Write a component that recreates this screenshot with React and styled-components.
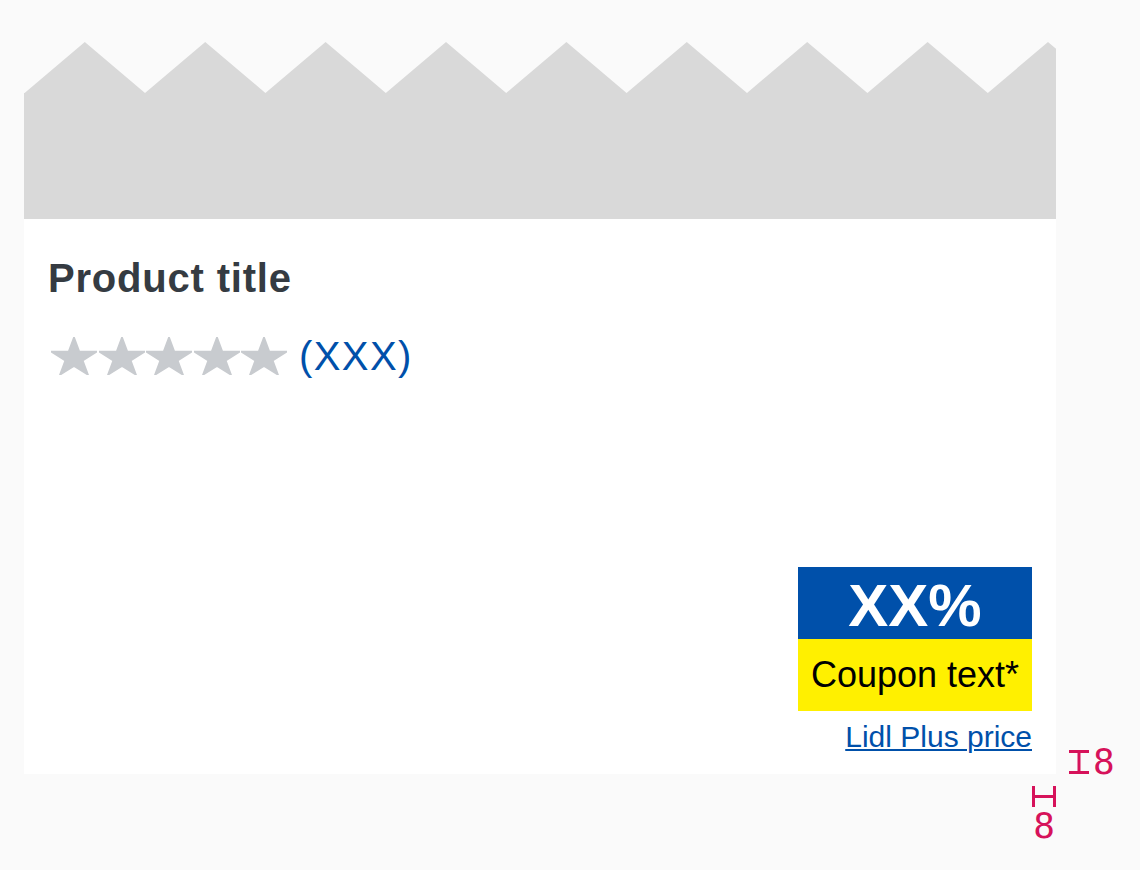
import React from "react";
import styled, { createGlobalStyle } from "styled-components";

const GlobalStyle = createGlobalStyle`
  html, body {
    margin: 0;
    padding: 0;
    background: #fafafa;
    font-family: "Liberation Sans", Arial, sans-serif;
  }
`;

// zigzag top edge of the image placeholder
const ZIG_W = 1032;
const ZIG_H = 177;
const PERIOD = 120.4;
const zigPoints = () => {
    const pts = [];
    for (let k = 0; k * PERIOD <= ZIG_W + PERIOD; k++) {
        const vx = 0.6 + k * PERIOD;
        const px = vx + PERIOD / 2;
        pts.push(`${vx},51`);
        pts.push(`${px},0`);
    }
    return `0,51 ${pts.join(" ")} ${ZIG_W + PERIOD},${ZIG_H} 0,${ZIG_H}`;
};

function Star() {
    return (
        <StarSvg viewBox="0 0 46 38">
            <polygon
                points="23,0 28.4,14.5 46,14.5 31.8,23.5 37.2,38 23,29 8.8,38 14.2,23.5 0,14.5 17.6,14.5"
                fill="#c8cbcf"
                stroke="#c8cbcf"
                strokeWidth="1.5"
                strokeLinejoin="round"
            />
        </StarSvg>
    );
}

function App() {
    return (
        <Page>
            <GlobalStyle />
            <Card>
                <ImageArea>
                    <svg width="100%" height="100%" viewBox={`0 0 ${ZIG_W} ${ZIG_H}`} preserveAspectRatio="none">
                        <polygon points={zigPoints()} fill="#d9d9d9" />
                    </svg>
                </ImageArea>

                <Body>
                    <Title>Product title</Title>
                    <Rating>
                        <Stars>
                            {[0, 1, 2, 3, 4].map((i) => (
                                <Star key={i} />
                            ))}
                        </Stars>
                        <Count>(XXX)</Count>
                    </Rating>

                    <PriceBlock>
                        <Discount>XX%</Discount>
                        <Coupon>Coupon text*</Coupon>
                        <PlusLink href="#">Lidl Plus price</PlusLink>
                    </PriceBlock>
                </Body>

                {/* spacing annotations */}
                <VMark>
                    <svg width="22" height="24" viewBox="0 0 22 24">
                        <path d="M1 1.5H21M1 22.5H21M11 1.5V22.5" stroke="#d6125a" strokeWidth="3" fill="none" />
                    </svg>
                    <MarkLabel>8</MarkLabel>
                </VMark>
                <HMark>
                    <svg width="24" height="21" viewBox="0 0 24 21">
                        <path d="M1.5 0V21M22.5 0V21M1.5 10.5H22.5" stroke="#d6125a" strokeWidth="3" fill="none" />
                    </svg>
                    <MarkLabel>8</MarkLabel>
                </HMark>
            </Card>
        </Page>
    );
}

export default App;

const Page = styled.div`
  padding: 42px 24px 0;
  min-height: 870px;
  box-sizing: border-box;
`;

const Card = styled.div`
  position: relative;
  width: 1032px;
`;

const ImageArea = styled.div`
  height: 177px;
  svg {
    display: block;
  }
`;

const Body = styled.div`
  background: #fff;
  min-height: 555px;
  box-sizing: border-box;
  padding: 37px 24px 24px;
  display: flex;
  flex-direction: column;
`;

const Title = styled.h2`
  margin: 0;
  font-size: 40px;
  line-height: 44px;
  font-weight: bold;
  letter-spacing: 0.8px;
  color: #353b42;
`;

const Rating = styled.div`
  margin-top: 35px;
  height: 42px;
  display: flex;
  align-items: center;
  gap: 12px;
`;

const Stars = styled.div`
  display: flex;
  gap: 1.5px;
  padding-left: 3px;
`;

const StarSvg = styled.svg`
  display: block;
  width: 46px;
  height: 38px;
`;

const Count = styled.span`
  font-size: 40px;
  line-height: 42px;
  letter-spacing: 1.4px;
  color: #0050aa;
`;

const PriceBlock = styled.div`
  margin-top: auto;
  align-self: flex-end;
  display: flex;
  flex-direction: column;
  align-items: flex-end;
`;

const Discount = styled.div`
  width: 234px;
  height: 72px;
  box-sizing: border-box;
  padding-top: 5px;
  background: #0050aa;
  color: #fff;
  font-size: 60px;
  font-weight: bold;
  line-height: 1;
  display: flex;
  align-items: center;
  justify-content: center;
`;

const Coupon = styled.div`
  width: 234px;
  height: 72px;
  background: #fff000;
  color: #000;
  font-size: 36px;
  line-height: 1;
  display: flex;
  align-items: center;
  justify-content: center;
`;

const PlusLink = styled.a`
  margin-top: 13px;
  font-size: 30px;
  line-height: 26px;
  color: #0050aa;
  text-decoration: underline;
  text-underline-offset: 2px;
  text-decoration-thickness: 2px;
`;

const VMark = styled.div`
  position: absolute;
  left: calc(100% + 12px);
  bottom: 0;
  height: 24px;
  display: flex;
  align-items: center;
  gap: 3px;
  svg {
    display: block;
  }
`;

const HMark = styled.div`
  position: absolute;
  right: 0;
  top: calc(100% + 12px);
  width: 24px;
  display: flex;
  flex-direction: column;
  align-items: center;
  gap: 4px;
  svg {
    display: block;
  }
`;

const MarkLabel = styled.span`
  font-family: "DejaVu Sans Mono", monospace;
  font-size: 36px;
  line-height: 30px;
  color: #d6125a;
`;
